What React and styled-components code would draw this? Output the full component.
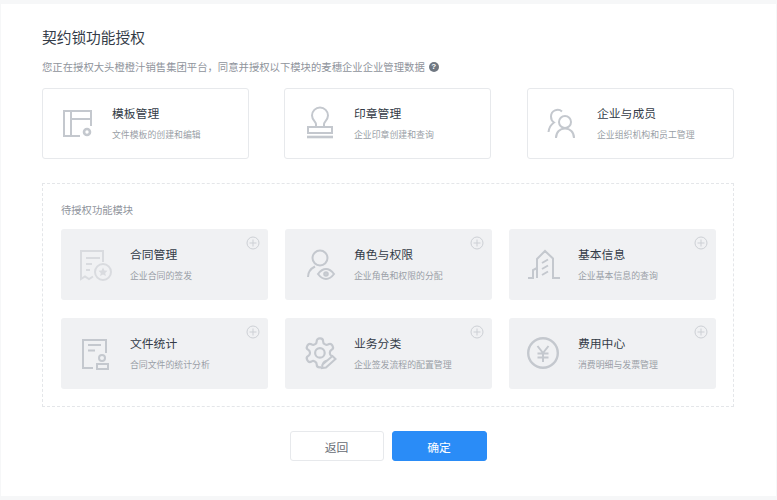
import React from 'react';
import styled, { createGlobalStyle } from 'styled-components';

const GlobalStyle = createGlobalStyle`
	html, body {
		margin: 0;
		padding: 0;
		background: #f6f7f8;
		font-family: "Noto Sans CJK SC", "Liberation Sans", sans-serif;
	}
`;

const GEAR =
	'M12.22 2h-.44a2 2 0 0 0-2 2v.18a2 2 0 0 1-1 1.73l-.43.25a2 2 0 0 1-2 0l-.15-.08a2 2 0 0 0-2.73.73l-.22.38a2 2 0 0 0 .73 2.73l.15.1a2 2 0 0 1 1 1.72v.51a2 2 0 0 1-1 1.74l-.15.09a2 2 0 0 0-.73 2.73l.22.38a2 2 0 0 0 2.73.73l.15-.08a2 2 0 0 1 2 0l.43.25a2 2 0 0 1 1 1.73V20a2 2 0 0 0 2 2h.44a2 2 0 0 0 2-2v-.18a2 2 0 0 1 1-1.73l.43-.25a2 2 0 0 1 2 0l.15.08a2 2 0 0 0 2.73-.73l.22-.39a2 2 0 0 0-.73-2.73l-.15-.08a2 2 0 0 1-1-1.74v-.5a2 2 0 0 1 1-1.74l.15-.09a2 2 0 0 0 .73-2.73l-.22-.38a2 2 0 0 0-2.73-.73l-.15.08a2 2 0 0 1-2 0l-.43-.25a2 2 0 0 1-1-1.73V4a2 2 0 0 0-2-2z';

const icons = {
	template: (
		<>
			<path d='M29 18V3H2v25h16' />
			<path d='M9 3v25M9 11h20' />
			<circle cx='25' cy='24' r='3' strokeWidth='2.6' />
		</>
	),
	stamp: (
		<>
			<path d='M12 20v-3c0-2.500-4-4-4-8.500a8 8 0 0 1 16 0c0 4.500-4 6-4 8.500v3' />
			<path d='M4 20h24v6H4z' />
			<path d='M3 30h26' strokeWidth='2.6' />
		</>
	),
	users: (
		<>
			<circle cx='18' cy='14' r='6' />
			<path d='M9 30c0-6 4-9.500 9-9.500s9 3.500 9 9.500' />
			<path d='M15 3.500C11 0 4 2.500 4 8.500c0 3 1.500 5 3 6C4 16.500 2 20 1.500 24' />
		</>
	),
	contract: (
		<>
			<path d='M25 13V2H3v28l4-2.500 4 2.500 4-2.500' />
			<path d='M8 9h14M8 15h6M8 21h4' />
			<circle cx='25' cy='23' r='8' />
			<path
				d='M25 18.500l1.400 3 3.100.300-2.300 2.100.700 3.100-2.900-1.600-2.900 1.600.700-3.100-2.300-2.100 3.100-.300z'
				fill='currentColor'
				stroke='none'
			/>
		</>
	),
	role: (
		<>
			<circle cx='15' cy='10' r='7.500' />
			<path d='M3 29c0-5 3-8.500 7-10.500' />
			<path d='M13 26c3-4 5.500-5 8-5s5 1 8 5c-3 4-5.500 5-8 5s-5-1-8-5z' />
			<circle cx='21' cy='26' r='1.600' strokeWidth='2.400' />
		</>
	),
	building: (
		<>
			<path d='M10 29V10l8-8 8 7.500V29h7' />
			<path d='M1 29h5v-8l4-2' />
			<path d='M15 14l6-3.500M15 20l6-3.500M15 26l6-3.500' />
		</>
	),
	stats: (
		<>
			<path d='M26 15V2H3v28h10' />
			<path d='M8 7h13M8 12.500h7' />
			<circle cx='22' cy='20' r='3' />
			<path d='M17 26h11v5H17z' />
		</>
	),
	gear: (
		<>
			<g transform='translate(-1.500 -1.500) scale(1.450)' strokeWidth='1.500'>
				<path d={GEAR} />
				<circle cx='12' cy='12' r='3.300' />
			</g>
			<path d='M32 20L19 32' stroke='#f0f1f3' strokeWidth='7' />
			<path d='M31.500 22L22 30.500l-4 .500 .500-3.500L28.500 19z' />
		</>
	),
	yen: (
		<>
			<circle cx='16' cy='16' r='14.800' strokeWidth='2.400' />
			<path d='M10.500 9l5.500 7 5.500-7M10.500 16.500h11M10.500 20.500h11M16 16v9' />
		</>
	),
};

const granted = [
	{ icon: 'template', title: '模板管理', desc: '文件模板的创建和编辑', dx: 0, dy: 0 },
	{ icon: 'stamp', title: '印章管理', desc: '企业印章创建和查询', dx: 0, dy: -1 },
	{ icon: 'users', title: '企业与成员', desc: '企业组织机构和员工管理', dx: 0, dy: 0 },
];

const pending = [
	{ icon: 'contract', title: '合同管理', desc: '企业合同的签发', dx: -2, dy: 0, light: true },
	{ icon: 'role', title: '角色与权限', desc: '企业角色和权限的分配', dx: 1, dy: -1 },
	{ icon: 'building', title: '基本信息', desc: '企业基本信息的查询', dx: -1, dy: 0 },
	{ icon: 'stats', title: '文件统计', desc: '合同文件的统计分析', dx: 0, dy: 0 },
	{ icon: 'gear', title: '业务分类', desc: '企业签发流程的配置管理', dx: 0, dy: -1 },
	{ icon: 'yen', title: '费用中心', desc: '消费明细与发票管理', dx: -1, dy: -1 },
];

function ModuleCard({ item, isPending }) {
	return (
		<Card $pending={isPending}>
			<IconSvg
				viewBox={`${-item.dx} ${-item.dy} 32 32`}
				$light={item.light}>
				{icons[item.icon]}
			</IconSvg>
			<CardText>
				<CardTitle>{item.title}</CardTitle>
				<CardDesc>{item.desc}</CardDesc>
			</CardText>
			{isPending && (
				<AddIcon viewBox='0 0 14 14'>
					<circle cx='7' cy='7' r='6' />
					<path d='M7 3.500v7M3.500 7h7' />
				</AddIcon>
			)}
		</Card>
	);
}

export default function App() {
	return (
		<>
			<GlobalStyle />
			<Panel>
				<Title>契约锁功能授权</Title>
				<Subtitle>
					您正在授权大头橙橙汁销售集团平台，同意并授权以下模块的麦穗企业企业管理数据
					<Help>?</Help>
				</Subtitle>
				<GrantedRow>
					{granted.map((item) => (
						<ModuleCard key={item.title} item={item} />
					))}
				</GrantedRow>
				<PendingBox>
					<PendingLabel>待授权功能模块</PendingLabel>
					<PendingGrid>
						{pending.map((item) => (
							<ModuleCard key={item.title} item={item} isPending />
						))}
					</PendingGrid>
				</PendingBox>
				<Actions>
					<Button>返回</Button>
					<Button $primary>确定</Button>
				</Actions>
			</Panel>
		</>
	);
}

const Panel = styled.div`
	box-sizing: border-box;
	width: 775px;
	height: 492px;
	margin: 4px 1px;
	padding: 24px 42px 0 41px;
	background: #fff;
`;

const Title = styled.h1`
	margin: 0;
	font-size: 14.7px;
	font-weight: 400;
	line-height: 18px;
	color: #333b47;
`;

const Subtitle = styled.div`
	display: flex;
	align-items: center;
	margin-top: 12px;
	font-size: 10.35px;
	line-height: 18px;
	color: #8f949c;
`;

const Help = styled.span`
	display: inline-flex;
	align-items: center;
	justify-content: center;
	width: 10px;
	height: 10px;
	margin-left: 4px;
	border-radius: 50%;
	background: #6f7781;
	color: #fff;
	font-family: "Liberation Sans", sans-serif;
	font-size: 8px;
	font-weight: 700;
	line-height: 10px;
`;

const GrantedRow = styled.div`
	display: flex;
	gap: 35px;
	margin-top: 12px;

	> :last-child {
		margin-left: auto;
	}
`;

const Card = styled.div`
	position: relative;
	box-sizing: border-box;
	display: flex;
	align-items: center;
	width: 207px;
	height: 71px;
	padding-left: 19px;
	border: ${(p) => (p.$pending ? 'none' : '1px solid #e7e9ec')};
	border-radius: 3px;
	background: ${(p) => (p.$pending ? '#f0f1f3' : '#fff')};
`;

const IconSvg = styled.svg`
	flex: none;
	width: 32px;
	height: 32px;
	margin-right: 18px;
	overflow: visible;
	fill: none;
	stroke: currentColor;
	stroke-width: 2;
	color: ${(p) => (p.$light ? '#d9dbdf' : '#c4c8ce')};
`;

const CardText = styled.div`
	display: flex;
	flex-direction: column;
	gap: 4px;
`;

const CardTitle = styled.div`
	font-size: 11.8px;
	line-height: 18px;
	color: #333b47;
`;

const CardDesc = styled.div`
	font-size: 8.9px;
	line-height: 18px;
	color: #9a9fa7;
`;

const AddIcon = styled.svg`
	position: absolute;
	top: 7px;
	right: 8px;
	width: 14px;
	height: 14px;
	fill: none;
	stroke: #cdd0d5;
	stroke-width: 1;
`;

const PendingBox = styled.div`
	box-sizing: border-box;
	height: 224px;
	margin-top: 24px;
	padding: 17px 17px 17px 18px;
	border: 1px dashed #e4e6e9;
`;

const PendingLabel = styled.div`
	font-size: 10.3px;
	line-height: 18px;
	color: #8f949c;
`;

const PendingGrid = styled.div`
	display: grid;
	grid-template-columns: repeat(3, 207px);
	grid-auto-rows: 71px;
	column-gap: 17px;
	row-gap: 18px;
	margin-top: 10px;
`;

const Actions = styled.div`
	display: flex;
	justify-content: center;
	gap: 8px;
	margin-top: 24px;
`;

const Button = styled.button`
	box-sizing: border-box;
	width: ${(p) => (p.$primary ? '95px' : '94px')};
	height: 30px;
	padding: 0;
	border: 1px solid ${(p) => (p.$primary ? '#2a8cf7' : '#e7e9ec')};
	border-radius: 3px;
	background: ${(p) => (p.$primary ? '#2a8cf7' : '#fff')};
	color: ${(p) => (p.$primary ? '#fff' : '#666b73')};
	font-family: inherit;
	font-size: 11.8px;
`;
